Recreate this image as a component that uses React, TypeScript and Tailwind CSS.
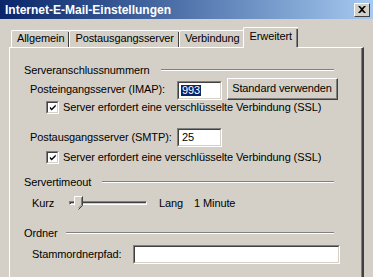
import React from 'react';

const font = { fontFamily: '"Liberation Sans", Arial, sans-serif' };

const Sunken = ({ className, children }: { className: string; children?: React.ReactNode }) => (
  <div className={`border border-t-[#808080] border-l-[#808080] border-b-white border-r-white ${className}`}>
    <div className="w-full h-full border border-t-[#404040] border-l-[#404040] border-b-[#d4d0c8] border-r-[#d4d0c8] bg-white flex items-center">
      {children}
    </div>
  </div>
);

const Check = ({ label }: { label: string }) => (
  <div className="flex items-center h-[14px] pl-[36px]">
    <Sunken className="w-[13px] h-[13px]">
      <svg width="9" height="9" viewBox="0 0 9 9" className="ml-[1px]">
        <path d="M1 3.5 L3 5.5 L7.5 1 L7.5 3.5 L3 8 L1 6 Z" fill="#000" />
      </svg>
    </Sunken>
    <span className="ml-[4px]">{label}</span>
  </div>
);

const Group = ({ title, lineLeft }: { title: string; lineLeft: number }) => (
  <div className="flex items-center h-[14px] pl-[14px] pr-[27px]">
    <span>{title}</span>
    <div className="flex-1 flex flex-col" style={{ marginLeft: lineLeft }}>
      <div className="h-px bg-[#808080]" />
      <div className="h-px bg-white" />
    </div>
  </div>
);

const Tab = ({ label, active }: { label: string; active?: boolean }) =>
  active ? (
    <div className="relative h-[21px] -mb-px px-[6px] -ml-[2px] bg-[#d4d0c8] border-t border-l border-white rounded-tl-[2px] flex items-start pt-[3px]">
      <span>{label}</span>
      <div className="absolute right-0 top-[1px] bottom-px w-[2px] border-r border-[#404040] bg-[#808080] bg-clip-content" />
    </div>
  ) : (
    <div className="relative h-[17px] px-[5px] border-t border-l border-white rounded-tl-[2px] flex items-start pt-[2px]">
      <span>{label}</span>
      <div className="absolute right-0 top-[1px] bottom-0 w-px bg-[#404040]" />
    </div>
  );

export default function App() {
  return (
    <div className="w-[373px] h-[277px] bg-[#d4d0c8] overflow-hidden text-[11px] text-black leading-none" style={font}>
      <div className="h-[19px] flex items-center justify-between pl-[5px] pr-[3px] bg-gradient-to-r from-[#0a246a] to-[#a6caf0]">
        <span className="text-white font-bold text-[12px]">Internet-E-Mail-Einstellungen</span>
        <div className="w-[16px] h-[14px] bg-[#d4d0c8] border border-t-white border-l-white border-b-[#404040] border-r-[#404040] flex items-center justify-center">
          <svg width="8" height="7" viewBox="0 0 8 7">
            <path d="M0 0 L2 0 L4 2 L6 0 L8 0 L5 3.5 L8 7 L6 7 L4 5 L2 7 L0 7 L3 3.5 Z" fill="#000" />
          </svg>
        </div>
      </div>

      <div className="pl-[9px] pr-[9px] pt-[8px] tracking-[-0.1px]">
        <div className="flex items-end h-[20px] pl-[2px]">
          <Tab label="Allgemein" />
          <Tab label="Postausgangsserver" />
          <Tab label="Verbindung" />
          <Tab label="Erweitert" active />
        </div>

        <div className="h-[240px] border-t border-l border-white border-r-2 border-r-[#404040]">
          <div className="h-full border-r border-[#808080] pt-[15px]">
            <Group title="Serveranschlussnummern" lineLeft={11} />

            <div className="flex items-start h-[22px] mt-[1px] pl-[20px]">
              <span className="w-[147px] mt-[6px]">Posteingangsserver (IMAP):</span>
              <Sunken className="w-[45px] h-[19px] mt-[3px]">
                <span className="ml-[2px] bg-[#0a246a] text-white px-px">993</span>
              </Sunken>
              <div className="ml-[5px] w-[111px] h-[22px] border border-t-white border-l-white border-b-[#404040] border-r-[#404040]">
                <div className="w-full h-full border-r border-b border-[#808080] flex items-center justify-center">
                  Standard verwenden
                </div>
              </div>
            </div>

            <Check label="Server erfordert eine verschlüsselte Verbindung (SSL)" />

            <div className="flex items-center h-[19px] mt-[14px] pl-[20px]">
              <span className="w-[147px]">Postausgangsserver (SMTP):</span>
              <Sunken className="w-[45px] h-[19px]">
                <span className="ml-[3px]">25</span>
              </Sunken>
            </div>

            <div className="mt-[3px]">
              <Check label="Server erfordert eine verschlüsselte Verbindung (SSL)" />
            </div>

            <div className="mt-[11px]">
              <Group title="Servertimeout" lineLeft={11} />
            </div>

            <div className="flex items-center h-[14px] mt-[7px] pl-[22px]">
              <span className="w-[37px]">Kurz</span>
              <div className="relative w-[78px] h-[14px] flex items-center">
                <div className="w-full h-[4px] border border-t-[#808080] border-l-[#808080] border-b-white border-r-white">
                  <div className="w-full h-full border-t border-l border-[#404040] bg-[#d4d0c8]" />
                </div>
                <svg className="absolute left-[5px] top-0" width="9" height="14" viewBox="0 0 9 14">
                  <path d="M0.5 0.5 H8.5 V9.5 L4.5 13.5 L0.5 9.5 Z" fill="#d4d0c8" />
                  <path d="M0.5 9.5 V0.5 H8" stroke="#fff" fill="none" />
                  <path d="M8.5 0.5 V9.5 L4.5 13.5" stroke="#404040" fill="none" />
                  <path d="M7.5 1.5 V9 L4.5 12" stroke="#808080" fill="none" />
                </svg>
              </div>
              <span className="ml-[12px] w-[35px]">Lang</span>
              <span>1 Minute</span>
            </div>

            <div className="mt-[16px]">
              <Group title="Ordner" lineLeft={8} />
            </div>

            <div className="flex items-center h-[19px] mt-[5px] pl-[22px]">
              <span className="w-[101px]">Stammordnerpfad:</span>
              <Sunken className="w-[207px] h-[19px]" />
            </div>
          </div>
        </div>
      </div>
    </div>
  );
}
